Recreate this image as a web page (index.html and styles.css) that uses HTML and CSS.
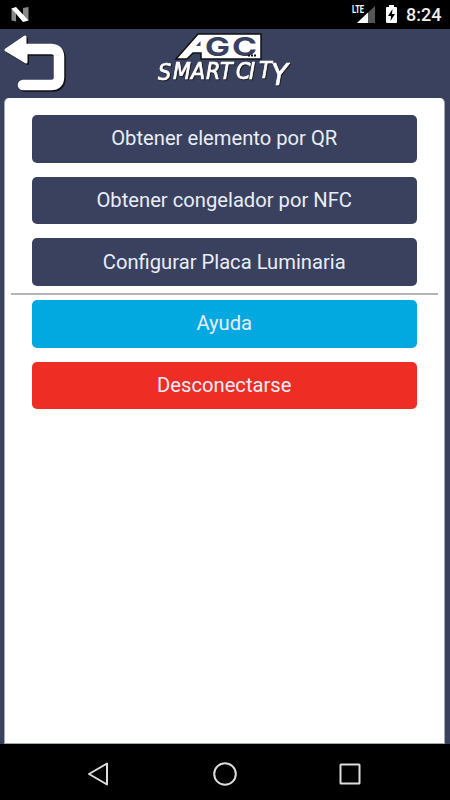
FILE: index.html
```
<!DOCTYPE html>
<html lang="es">
<head>
    <meta charset="UTF-8">
    <meta name="viewport" content="width=device-width, initial-scale=1.0">
    <title>AGC SmartCity</title>
    <link rel="stylesheet" href="styles.css">
</head>
<body>
    <div class="status-bar">
        <svg class="notification" width="20" height="18" viewBox="0 0 20 18">
            <path d="M1.500 2.500L6 1.500V15.500L1.500 14.500ZM13 2L18.500 1V14.500L13 15.500Z" fill="#888"/>
            <path d="M1.500 2.500L6 1L18.500 14.500L13 16Z" fill="#fff"/>
        </svg>
        <div class="status-icons">
            <svg width="25" height="20" viewBox="0 0 25 20">
                <path d="M6 19L24 2V19Z" fill="#555"/>
                <path d="M6 19L17 8.500V19Z" fill="#fff"/>
                <text x="1" y="9" class="lte" textLength="12" lengthAdjust="spacingAndGlyphs">LTE</text>
            </svg>
            <svg class="battery" width="13" height="20" viewBox="0 0 13 20">
                <path d="M4 1H9V3H11Q12 3 12 4V18Q12 19 11 19H2Q1 19 1 18V4Q1 3 2 3H4Z" fill="#fff"/>
                <path d="M7.500 5L3 12H6L5.500 17L10 10H7Z" fill="#000"/>
            </svg>
            <span class="clock">8:24</span>
        </div>
    </div>

    <div class="header">
        <svg class="back" width="72" height="66" viewBox="0 0 72 66">
            <g class="back-shadow" transform="translate(1.500 1.500)">
                <path d="M24 20H51Q59 20 59 28V48Q59 56 51 56H23" class="back-line"/>
                <path d="M6 21L25 8V17L26 25V33Z" class="back-head"/>
            </g>
            <g class="back-arrow">
                <path d="M24 20H51Q59 20 59 28V48Q59 56 51 56H23" class="back-line"/>
                <path d="M6 21L25 8V17L26 25V33Z" class="back-head"/>
            </g>
        </svg>
        <svg class="logo" width="150" height="70" viewBox="0 0 150 70">
            <path d="M26 34L48 9H111V34H51V28H43L37 34Z" class="logo-plate"/>
            <path d="M50.500 16V21H46Z" class="logo-cut"/>
            <text x="55" y="31" class="logo-agc" textLength="25" lengthAdjust="spacingAndGlyphs">G</text>
            <text x="82" y="31" class="logo-agc" textLength="25" lengthAdjust="spacingAndGlyphs">C</text>
            <path d="M98 30.500H106" class="logo-dots"/>
            <text class="logo-city" x="8 23 41 56 70 86 99 109" y="55 54 54 54 54 54 54 53">SMARTCIT<tspan x="121" y="60" class="logo-tail">Y</tspan></text>
        </svg>
    </div>

    <div class="content">
        <div class="panel">
            <button class="btn">Obtener elemento por QR</button>
            <button class="btn">Obtener congelador por NFC</button>
            <button class="btn btn-last">Configurar Placa Luminaria</button>
            <hr>
            <button class="btn btn-help">Ayuda</button>
            <button class="btn btn-exit">Desconectarse</button>
        </div>
    </div>

    <div class="nav-bar">
        <svg width="26" height="26" viewBox="0 0 26 26"><path d="M3 13L21 2.500V23.500Z"/></svg>
        <svg width="26" height="26" viewBox="0 0 26 26"><circle cx="13" cy="13" r="10.800"/></svg>
        <svg width="26" height="26" viewBox="0 0 26 26"><rect x="3.500" y="3.500" width="19" height="19" rx=".5"/></svg>
    </div>
</body>
</html>
```
FILE: styles.css
```
* {
    box-sizing: border-box;
}

body {
    margin: 0;
    height: 100vh;
    display: flex;
    flex-direction: column;
    background-color: #39415e;
    font-family: Roboto, "Liberation Sans", sans-serif;
    overflow: hidden;
}

.status-bar {
    height: 29px;
    padding: 0 10px;
    display: flex;
    justify-content: space-between;
    align-items: center;
    background-color: #000;
}

.status-icons {
    display: flex;
    align-items: center;
    padding-bottom: 2px;
}

.lte {
    font-size: 10px;
    font-weight: bold;
    fill: #fff;
    stroke: #000;
    stroke-width: 2px;
    paint-order: stroke;
}

.battery {
    margin: 0 8px 0 9px;
}

.clock {
    width: 34px;
    font-size: 18px;
    font-weight: 500;
    line-height: 20px;
    color: #eee;
    padding-top: 2px;
    white-space: nowrap;
}

.header {
    height: 69px;
    display: flex;
}

.back {
    margin-right: 78px;
}

.back-line {
    fill: none;
    stroke-width: 10.5px;
    stroke-linecap: round;
}

.back-head {
    stroke-width: 3px;
    stroke-linejoin: round;
}

.back-shadow {
    stroke: #111;
    fill: #111;
}

.back-arrow {
    stroke: #fff;
    fill: #fff;
}

.logo {
    margin-top: -4px;
}

.logo-plate {
    fill: #fff;
    stroke: #111;
    stroke-width: 1.5px;
}

.logo-cut {
    fill: #39415e;
}

.logo-agc {
    font-family: Inter, sans-serif;
    font-size: 26px;
    font-weight: 700;
    fill: #39415e;
}

.logo-dots {
    stroke: #111;
    stroke-width: 2px;
    stroke-dasharray: 2 1;
}

.logo-city {
    font-family: "DejaVu Sans Condensed", "DejaVu Sans", sans-serif;
    font-size: 23px;
    font-style: italic;
    fill: #fff;
    stroke: #fff;
    stroke-width: .7px;
    stroke-linejoin: round;
    filter: drop-shadow(1px 1px 0 #222);
}

.logo-tail {
    font-size: 31px;
}

.content {
    flex: 1;
    padding: 0 5px 0 4px;
    display: flex;
}

.panel {
    flex: 1;
    padding: 17px 27px 0 26.500px;
    background-color: #fff;
    border: 1px solid #a3a8b5;
    border-top: 0;
    border-radius: 5px 5px 0 0;
}

.btn {
    display: block;
    width: 100%;
    height: 47.500px;
    margin: 0 0 14.200px;
    padding: 0 0 1px;
    border: 0;
    border-radius: 5px;
    background-color: #39415e;
    color: #e9edf8;
    font-family: inherit;
    font-size: 20.200px;
}

.btn-last {
    margin-bottom: 7.200px;
}

hr {
    height: 2px;
    margin: 0 -21px 5px;
    border: 0;
    background-color: #b5b5b7;
}

.btn-help {
    background-color: #02a9e1;
}

.btn-exit {
    background-color: #ee2e24;
}

.nav-bar {
    height: 56px;
    padding: 4px 87px 0 86px;
    display: flex;
    justify-content: space-between;
    align-items: center;
    background-color: #000;
}

.nav-bar svg {
    fill: none;
    stroke: #ddd;
    stroke-width: 2px;
    stroke-linejoin: round;
}
```
